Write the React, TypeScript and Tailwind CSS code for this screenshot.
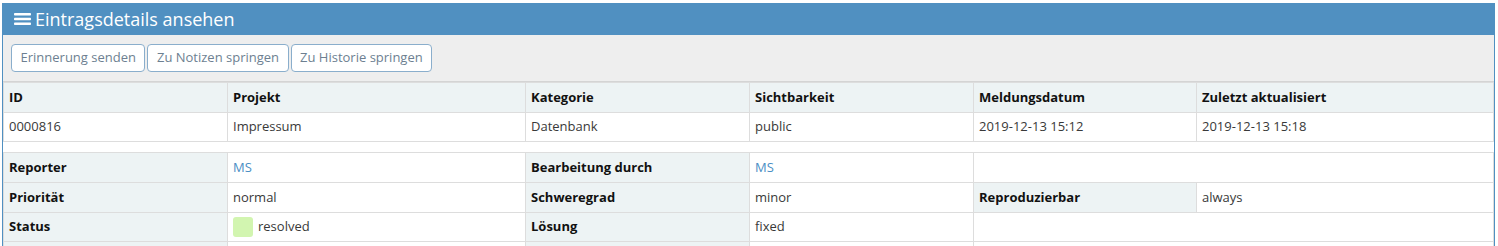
import React from "react";

const font = { fontFamily: '"Open Sans", "Noto Sans", sans-serif' };

function Bars() {
  return (
    <svg width="17" height="12" viewBox="0 0 17 12" className="mr-[4px] shrink-0">
      <rect x="0" y="0" width="17" height="2.6" rx="0.8" fill="#fff" />
      <rect x="0" y="4.7" width="17" height="2.6" rx="0.8" fill="#fff" />
      <rect x="0" y="9.4" width="17" height="2.6" rx="0.8" fill="#fff" />
    </svg>
  );
}

const th = "h-[30px] border border-[#dddddd] bg-[#edf3f4] px-[5px] text-left font-bold text-[#111]";
const td = "h-[29px] border border-[#dddddd] px-[5px] text-left text-[#393939]";
const td2 = "h-[30px] border border-[#dddddd] px-[5px] text-left text-[#393939]";
const lab = "h-[30px] border border-[#dddddd] bg-[#edf3f4] px-[5px] text-left font-bold text-[#111]";
const lab3 = "h-[29px] border border-[#dddddd] bg-[#edf3f4] px-[5px] text-left font-bold text-[#111]";
const link = "text-[#4a8ec4]";

export default function App() {
  return (
    <div className="bg-white min-h-[246px] pt-[3px]" style={font}>
      <div className="ml-[2px] w-[1493px] border-x border-[#5090c1]">
        <div className="flex h-[32px] items-center bg-[#5090c1] pl-[11px] text-white">
          <Bars />
          <span className="text-[18px] leading-none">Eintragsdetails ansehen</span>
        </div>
        <div className="flex gap-[2px] border-b border-[#d4d4d4] bg-[#eeeeee] px-[8px] pb-[9px] pt-[9px]">
          {["Erinnerung senden", "Zu Notizen springen", "Zu Historie springen"].map((t) => (
            <button
              key={t}
              className="h-[28px] rounded-[4px] border border-[#8aaecc] bg-white px-[8.5px] text-[13px] text-[#6d7f91]"
            >
              {t}
            </button>
          ))}
        </div>
        <table className="w-full table-fixed border-collapse text-[13px]">
          <colgroup>
            <col className="w-[224px]" />
            <col className="w-[298px]" />
            <col className="w-[224px]" />
            <col className="w-[224px]" />
            <col className="w-[223px]" />
            <col />
          </colgroup>
          <thead>
            <tr>
              <th className={th}>ID</th>
              <th className={th}>Projekt</th>
              <th className={th}>Kategorie</th>
              <th className={th}>Sichtbarkeit</th>
              <th className={th}>Meldungsdatum</th>
              <th className={th}>Zuletzt aktualisiert</th>
            </tr>
          </thead>
          <tbody>
            <tr>
              <td className={td}>0000816</td>
              <td className={td}>Impressum</td>
              <td className={td}>Datenbank</td>
              <td className={td}>public</td>
              <td className={td}>2019-12-13 15:12</td>
              <td className={td}>2019-12-13 15:18</td>
            </tr>
            <tr>
              <td colSpan={6} className="h-[11px] border-y border-[#dddddd] p-0"></td>
            </tr>
            <tr>
              <th className={lab}>Reporter</th>
              <td className={td2}><span className={link}>MS</span></td>
              <th className={lab}>Bearbeitung durch</th>
              <td className={td2}><span className={link}>MS</span></td>
              <td colSpan={2} className={td2}></td>
            </tr>
            <tr>
              <th className={lab}>Priorität</th>
              <td className={td2}>normal</td>
              <th className={lab}>Schweregrad</th>
              <td className={td2}>minor</td>
              <th className={lab}>Reproduzierbar</th>
              <td className={td2}>always</td>
            </tr>
            <tr>
              <th className={lab3}>Status</th>
              <td className={td}>
                <span className="flex items-center">
                  <span className="mr-[5px] inline-block h-[20px] w-[20px] rounded-[3px] bg-[#d2f5b0]"></span>
                  resolved
                </span>
              </td>
              <th className={lab3}>Lösung</th>
              <td className={td}>fixed</td>
              <td colSpan={2} className={td}></td>
            </tr>
            <tr>
              <th className={lab}></th>
              <td className={td2}></td>
              <th className={lab}></th>
              <td className={td2}></td>
              <td colSpan={2} className={td2}></td>
            </tr>
          </tbody>
        </table>
      </div>
    </div>
  );
}
